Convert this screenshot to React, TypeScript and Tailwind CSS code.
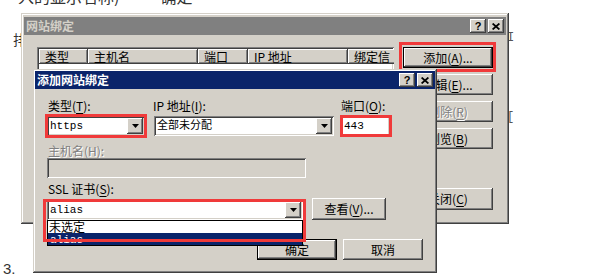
import type { ReactNode } from "react";

const FONT = "font-['Noto_Sans_CJK_SC','Liberation_Sans',sans-serif]";
const MONO = "font-['Liberation_Mono','Noto_Sans_CJK_SC',monospace]";

const RAISED =
  "shadow-[inset_-1px_-1px_#404040,inset_1px_1px_#ffffff,inset_-2px_-2px_#808080,inset_2px_2px_#d4d0c8]";
const SUNKEN =
  "shadow-[inset_1px_1px_#808080,inset_-1px_-1px_#ffffff,inset_2px_2px_#404040,inset_-2px_-2px_#d4d0c8]";
const FRAME =
  "shadow-[inset_-1px_-1px_#404040,inset_1px_1px_#d4d0c8,inset_-2px_-2px_#808080,inset_2px_2px_#ffffff]";
const HEADER = "shadow-[inset_-1px_-1px_#404040,inset_1px_1px_#ffffff,inset_-2px_-2px_#808080]";
const DISABLED = "text-[#808080] [text-shadow:1px_1px_0_#ffffff]";
const RED = "pointer-events-none absolute border-[3px] border-[#f03a3a]";

function Key({ k }: { k: string }) {
  return <span className="underline underline-offset-[2px]">{k}</span>;
}

interface ButtonProps {
  children: ReactNode;
  className?: string;
  isDefault?: boolean;
  disabled?: boolean;
}

function Button({ children, className = "", isDefault, disabled }: ButtonProps) {
  return (
    <div
      className={`flex shrink-0 items-center justify-center bg-[#d4d0c8] text-[12px] leading-none ${RAISED} ${
        isDefault ? "border border-black" : ""
      } ${disabled ? DISABLED : "text-black"} ${className}`}
    >
      {children}
    </div>
  );
}

function Arrow() {
  return (
    <svg width="7" height="4" viewBox="0 0 7 4">
      <path d="M0 0h7L3.5 4z" fill="black" />
    </svg>
  );
}

function CaptionButtons() {
  return (
    <div className="flex gap-[2px]">
      <div className={`flex h-[14px] w-[16px] items-center justify-center bg-[#d4d0c8] ${RAISED}`}>
        <span className="font-['Liberation_Sans'] text-[11px] font-bold leading-none text-black">?</span>
      </div>
      <div className={`flex h-[14px] w-[16px] items-center justify-center bg-[#d4d0c8] ${RAISED}`}>
        <svg width="8" height="7" viewBox="0 0 8 7">
          <path d="M0.6 0.5L7.4 6.5M7.4 0.5L0.6 6.5" stroke="black" strokeWidth="1.7" />
        </svg>
      </div>
    </div>
  );
}

function TitleBar({ title, active }: { title: string; active?: boolean }) {
  return (
    <div
      className={`flex h-[18px] shrink-0 items-center justify-between pl-[2px] pr-[2px] ${
        active ? "bg-[#0a246a] text-white" : "bg-[#808080] text-[#d4d0c8]"
      }`}
    >
      <span className="text-[12px] font-bold leading-none">{title}</span>
      <CaptionButtons />
    </div>
  );
}

function Combo({ value, className = "" }: { value: string; className?: string }) {
  return (
    <div className={`flex h-[20px] items-stretch bg-white p-[2px] ${SUNKEN} ${className}`}>
      <span className={`flex flex-1 items-center pl-[1px] text-[11px] leading-none text-black ${MONO}`}>{value}</span>
      <div className={`flex w-[16px] items-center justify-center bg-[#d4d0c8] ${RAISED}`}>
        <Arrow />
      </div>
    </div>
  );
}

const COLUMNS = [
  { label: "类型", w: "w-[49px]" },
  { label: "主机名", w: "w-[110px]" },
  { label: "端口", w: "w-[50px]" },
  { label: "IP 地址", w: "w-[100px]" },
  { label: "绑定信", w: "w-[60px]" },
];

function SiteBindings() {
  return (
    <div
      className={`absolute left-[21px] top-[13px] flex h-[211px] w-[488px] flex-col bg-[#d4d0c8] p-[3px] pt-[4px] ${FRAME}`}
    >
      <TitleBar title="网站绑定" />
      <div className="flex gap-[9px] pl-[13px] pt-[12px]">
        <div className={`h-[134px] w-[357px] shrink-0 overflow-hidden bg-white p-[2px] ${SUNKEN}`}>
          <div className="flex h-[15px]">
            {COLUMNS.map((c) => (
              <div
                key={c.label}
                className={`shrink-0 bg-[#d4d0c8] pl-[6px] text-[12px] leading-[15px] text-black ${HEADER} ${c.w}`}
              >
                {c.label}
              </div>
            ))}
          </div>
        </div>
        <div className="flex w-[90px] flex-col gap-[6px]">
          <div className="relative">
            <Button isDefault className="h-[21px]">
              添加(<Key k="A" />)...
            </Button>
            <div className={`${RED} -bottom-[4px] -left-[4px] -right-[3px] -top-[5px]`} />
          </div>
          <Button className="h-[21px]">
            编辑(<Key k="E" />)...
          </Button>
          <Button disabled className="h-[21px]">
            删除(<Key k="R" />)
          </Button>
          <Button className="h-[21px]">
            浏览(<Key k="B" />)
          </Button>
          <Button className="mt-[33px] h-[22px]">
            关闭(<Key k="C" />)
          </Button>
        </div>
      </div>
    </div>
  );
}

function AddBinding() {
  return (
    <div
      className={`absolute left-[33px] top-[69px] z-10 flex h-[204px] w-[404px] flex-col bg-[#d4d0c8] p-[2px] ${FRAME}`}
    >
      <TitleBar title="添加网站绑定" active />
      <div className="flex flex-col px-[12px] pt-[10px] text-[12px] leading-[14px] text-black">
        <div className="flex">
          <div className="w-[98px]">
            <div className="h-[14px] pl-[1px]">
              类型(<Key k="T" />):
            </div>
            <div className="relative mt-[3px]">
              <Combo value="https" />
              <div className={`${RED} -inset-[2px]`} />
            </div>
          </div>
          <div className="ml-[9px] w-[180px]">
            <div className="h-[14px] -ml-[1px]">
              IP 地址(<Key k="I" />):
            </div>
            <div className="mt-[3px]">
              <Combo value="全部未分配" />
            </div>
          </div>
          <div className="ml-[7px] w-[49px]">
            <div className="h-[14px]">
              端口(<Key k="O" />):
            </div>
            <div className="relative mt-[3px]">
              <div className={`flex h-[20px] items-center bg-white pl-[3px] text-[11px] ${MONO} ${SUNKEN}`}>443</div>
              <div className={`${RED} -bottom-[1px] -left-[1px] -right-[2px] -top-[1px]`} />
            </div>
          </div>
        </div>

        <div className={`mt-[8px] h-[14px] pl-[1px] ${DISABLED}`}>
          主机名(<Key k="H" />):
        </div>
        <div className={`h-[20px] w-[259px] bg-[#d4d0c8] ${SUNKEN}`} />

        <div className="flex items-end">
          <div className="w-[256px]">
            <div className="mt-[4px] h-[14px] pl-[1px]">
              SSL 证书(<Key k="S" />):
            </div>
            <div className="relative mt-[4px]">
              <Combo value="alias" className="h-[19px]" />
              <div className="absolute left-0 top-full z-10 h-[26px] w-full overflow-hidden border border-black bg-white">
                <div className="h-[12px] pl-[1px] text-[12px] leading-[12px]">未选定</div>
                <div className={`h-[12px] bg-[#0a246a] pl-[2px] text-[11px] leading-[14px] text-white ${MONO}`}>alias</div>
              </div>
              <div className={`${RED} -left-[4px] -right-[3px] -top-[1px] z-20 h-[43px]`} />
            </div>
          </div>
          <Button className="ml-[9px] h-[22px] w-[74px]">
            查看(<Key k="V" />)...
          </Button>
        </div>

        <div className="mt-[19px] flex justify-end gap-[6px]">
          <Button isDefault className="h-[21px] w-[80px]">
            确定
          </Button>
          <Button className="h-[21px] w-[80px]">取消</Button>
        </div>
      </div>
    </div>
  );
}

export default function App() {
  return (
    <div className={`relative h-[279px] w-[608px] overflow-hidden bg-white text-[#333] ${FONT}`}>
      <div className="flex h-full">
        <div className="flex w-[509px] flex-col">
          <div className="h-[6px] overflow-hidden whitespace-nowrap pl-[18px] text-[16px] leading-[20px]">
            <div className="-mt-[14px] flex">
              <span>入的显示名称)</span>
              <span className="ml-[41px]">确定</span>
            </div>
          </div>
          <div className="mt-[26px] pl-[13px] text-[14px] leading-[14px]">排</div>
          <div className="mb-[2px] mt-auto pl-[3px] font-['Liberation_Sans'] text-[15px] leading-[16px]">3.</div>
        </div>
        <div className="flex flex-1 flex-col text-[12px] leading-[12px] text-[#555]">
          <div className="-ml-[2px] mt-[32px] font-['Liberation_Mono']">I</div>
          <div className="-ml-[2px] mt-[67px] font-['Liberation_Mono']">[</div>
        </div>
      </div>
      <SiteBindings />
      <AddBinding />
    </div>
  );
}
